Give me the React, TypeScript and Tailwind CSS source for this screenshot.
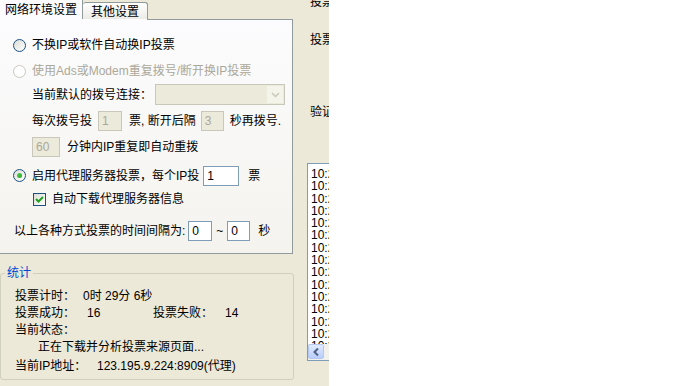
import React from 'react';

const tabBorder = 'border-[#919B9C]';

function Radio({ checked = false, disabled = false }: { checked?: boolean; disabled?: boolean }) {
  return (
    <span
      className={`relative flex h-[13px] w-[13px] shrink-0 items-center justify-center rounded-full border ${
        disabled
          ? 'border-[#CAC8BB] bg-white'
          : 'border-[#1C5180] bg-gradient-to-br from-[#DCDCD7] to-white'
      }`}
    >
      {checked && (
        <span className="h-[5px] w-[5px] rounded-full bg-gradient-to-br from-[#55D551] to-[#21A121]" />
      )}
    </span>
  );
}

function Checkbox({ checked = false }: { checked?: boolean }) {
  return (
    <span className="flex h-[13px] w-[13px] shrink-0 items-center justify-center border border-[#1C5180] bg-gradient-to-br from-[#DCDCD7] to-white">
      {checked && (
        <svg width="9" height="9" viewBox="0 0 9 9">
          <path d="M1 4 L3.5 6.5 L8 2" fill="none" stroke="#21A121" strokeWidth="2" />
        </svg>
      )}
    </span>
  );
}

function TextBox({
  value,
  width,
  disabled = false,
}: {
  value: string;
  width: string;
  disabled?: boolean;
}) {
  return (
    <span
      className={`flex h-[20px] shrink-0 items-center border pl-[3px] ${width} ${
        disabled
          ? 'border-[#C9C7BA] bg-[#EBEADB] text-[#ACA899]'
          : 'border-[#7F9DB9] bg-white text-black'
      }`}
    >
      {value}
    </span>
  );
}

const logLines = Array.from({ length: 15 }, (_, i) => `10:2${i % 10}`);

export default function App() {
  return (
    <div className="flex h-[386px] w-[683px] overflow-hidden bg-white font-['Liberation_Sans','Noto_Sans_CJK_SC',sans-serif] text-[12px] leading-[14px] text-black">
      <div className="flex h-full w-[329px] shrink-0 overflow-hidden bg-[#ECE9D8]">
        {/* left column */}
        <div className="flex w-[294px] shrink-0 flex-col">
          {/* tabs */}
          <div className="flex h-[19px] items-end">
            <div className={`flex h-[19px] w-[83px] items-center border-r ${tabBorder} bg-[#FCFCFE] pl-[5px]`}>
              网络环境设置
            </div>
            <div
              className={`flex h-[17px] w-[65px] items-center justify-center rounded-t-[3px] border-t border-r ${tabBorder} bg-gradient-to-b from-white to-[#ECEBE6] pt-[2px]`}
            >
              其他设置
            </div>
          </div>

          {/* tab panel */}
          <div
            className={`relative flex h-[235px] w-[293px] flex-col border-r border-b ${tabBorder} bg-gradient-to-b from-[#FCFCFE] to-[#F4F3EE] pt-[16px]`}
          >
            <span className={`absolute top-0 right-0 left-[147px] border-t ${tabBorder}`} />
            <div className="flex h-[20px] items-center gap-[6px] pl-[13px]">
              <Radio />
              <span>不换IP或软件自动换IP投票</span>
            </div>
            <div className="mt-[6px] flex h-[20px] items-center gap-[6px] pl-[13px] text-[#ACA899]">
              <Radio disabled />
              <span>使用Ads或Modem重复拨号/断开换IP投票</span>
            </div>
            <div className="mt-[3px] flex h-[21px] items-center pl-[32px]">
              <span className="w-[123px]">当前默认的拨号连接：</span>
              <span className="flex h-[21px] w-[130px] items-center justify-end border border-[#C9C7BA] bg-[#EBEADB] p-[1px]">
                <span className="flex h-[17px] w-[16px] items-center justify-center bg-[#F5F4EA]">
                  <svg width="9" height="6" viewBox="0 0 9 6">
                    <path d="M1 1 L4.5 4.5 L8 1" fill="none" stroke="#C9C7BA" strokeWidth="1.5" />
                  </svg>
                </span>
              </span>
            </div>
            <div className="mt-[5px] flex h-[21px] items-center pl-[32px]">
              <span>每次拨号投</span>
              <span className="ml-[6px]">
                <TextBox value="1" width="w-[24px]" disabled />
              </span>
              <span className="ml-[7px]">票, 断开后隔</span>
              <span className="ml-[5px]">
                <TextBox value="3" width="w-[23px]" disabled />
              </span>
              <span className="ml-[6px]">秒再拨号.</span>
            </div>
            <div className="mt-[5px] flex h-[21px] items-center pl-[32px]">
              <TextBox value="60" width="w-[28px]" disabled />
              <span className="ml-[7px]">分钟内IP重复即自动重拨</span>
            </div>
            <div className="mt-[8px] flex h-[21px] items-center pl-[13px]">
              <Radio checked />
              <span className="ml-[6px]">启用代理服务器投票，每个IP投</span>
              <span className="ml-[4px]">
                <TextBox value="1" width="w-[36px]" />
              </span>
              <span className="ml-[9px]">票</span>
            </div>
            <div className="mt-[3px] flex h-[20px] items-center pl-[33px]">
              <Checkbox checked />
              <span className="ml-[6px]">自动下载代理服务器信息</span>
            </div>
            <div className="mt-[11px] flex h-[21px] items-center pl-[14px]">
              <span>以上各种方式投票的时间间隔为:</span>
              <span className="ml-[3px]">
                <TextBox value="0" width="w-[24px]" />
              </span>
              <span className="mx-[4px]">~</span>
              <TextBox value="0" width="w-[23px]" />
              <span className="ml-[8px]">秒</span>
            </div>
          </div>

          {/* stats group */}
          <div className="relative mt-[19px] h-[107px] w-[294px] rounded-[3px] border border-[#D0D0BF] pt-[13px] pl-[14px]">
            <span className="absolute -top-[8px] left-[4px] bg-[#ECE9D8] px-[2px] text-[#0046D5]">统计</span>
            <div className="flex h-[17px] items-center">
              <span className="w-[68px]">投票计时：</span>
              <span>0时 29分 6秒</span>
            </div>
            <div className="flex h-[17px] items-center">
              <span className="w-[72px]">投票成功：</span>
              <span className="w-[66px]">16</span>
              <span className="w-[72px]">投票失败：</span>
              <span>14</span>
            </div>
            <div className="flex h-[17px] items-center">当前状态：</div>
            <div className="flex h-[18px] items-center pl-[23px]">正在下载并分析投票来源页面...</div>
            <div className="flex h-[19px] items-center">
              <span className="w-[82px]">当前IP地址：</span>
              <span>123.195.9.224:8909(代理)</span>
            </div>
          </div>
        </div>

        {/* right column (clipped) */}
        <div className="flex min-w-0 flex-1 flex-col overflow-hidden pl-[13px]">
          <div className="-mt-[5px] flex h-[14px] items-center whitespace-nowrap pl-[3px]">投票网址：</div>
          <div className="mt-[24px] flex h-[14px] items-center whitespace-nowrap pl-[3px]">投票选项：</div>
          <div className="mt-[58px] flex h-[14px] items-center whitespace-nowrap pl-[3px]">验证码：</div>
          <div className="mt-[44px] flex h-[198px] w-[120px] flex-col border border-[#7F9DB9] bg-white">
            <div className="flex flex-1 flex-col overflow-hidden pt-[4px] pl-[3px]">
              {logLines.map((line, i) => (
                <div key={`log-${i}`} className="h-[12.3px] shrink-0 whitespace-nowrap leading-[12px]">
                  {line}
                </div>
              ))}
            </div>
            <div className="flex h-[16px] shrink-0 bg-[#F3F1EC]">
              <span className="flex h-[15px] w-[16px] items-center justify-center rounded-[2px] border border-[#B4C8F6] bg-gradient-to-b from-[#E2EBFE] to-[#B9CDFB]">
                <svg width="6" height="8" viewBox="0 0 6 8">
                  <path d="M5 0.5 L1.5 4 L5 7.5" fill="none" stroke="#4D6185" strokeWidth="2" />
                </svg>
              </span>
            </div>
          </div>
        </div>
      </div>
    </div>
  );
}
